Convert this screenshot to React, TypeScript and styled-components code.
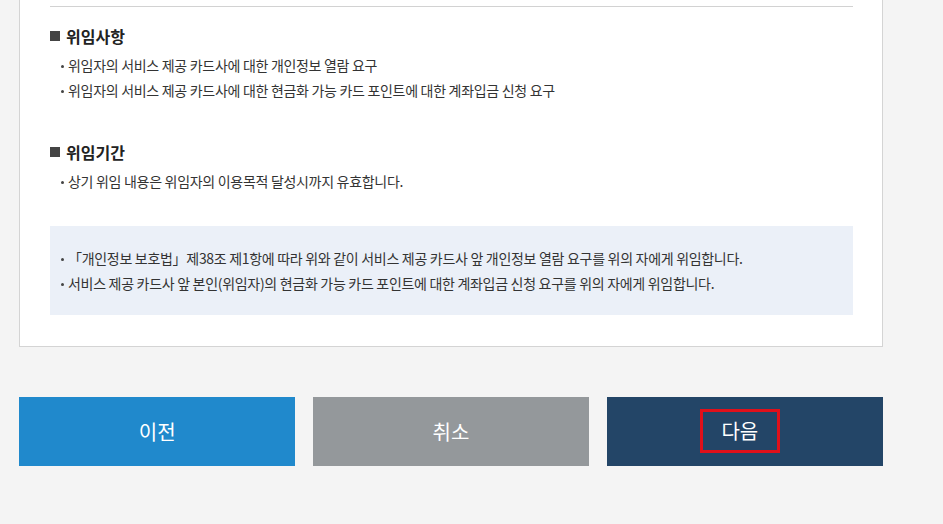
import { FC } from "react";
import styled, { createGlobalStyle } from "styled-components";

const GlobalStyle = createGlobalStyle`
  html, body {
    margin: 0;
    padding: 0;
    background: #f4f4f4;
  }
  body {
    font-family: "Noto Sans CJK KR", "Noto Sans", sans-serif;
    color: #333;
  }
`;

type Section = { title: string; items: string[] };

const sections: Section[] = [
  {
    title: "위임사항",
    items: [
      "위임자의 서비스 제공 카드사에 대한 개인정보 열람 요구",
      "위임자의 서비스 제공 카드사에 대한 현금화 가능 카드 포인트에 대한 계좌입금 신청 요구",
    ],
  },
  {
    title: "위임기간",
    items: ["상기 위임 내용은 위임자의 이용목적 달성시까지 유효합니다."],
  },
];

const notices = [
  "「개인정보 보호법」제38조 제1항에 따라 위와 같이 서비스 제공 카드사 앞 개인정보 열람 요구를 위의 자에게 위임합니다.",
  "서비스 제공 카드사 앞 본인(위임자)의 현금화 가능 카드 포인트에 대한 계좌입금 신청 요구를 위의 자에게 위임합니다.",
];

const App: FC = () => {
  return (
    <>
      <GlobalStyle />
      <StPage>
        <StCard>
          <StDivider />
          {sections.map((section, index) => (
            <StSection key={section.title} $first={index === 0}>
              <StHeading>{section.title}</StHeading>
              <StList>
                {section.items.map((item) => (
                  <li key={item}>{item}</li>
                ))}
              </StList>
            </StSection>
          ))}
          <StNotice>
            <StList>
              {notices.map((n) => (
                <li key={n}>{n}</li>
              ))}
            </StList>
          </StNotice>
        </StCard>
        <StButtons>
          <StButton $bg="#2089cc">이전</StButton>
          <StButton $bg="#94989b">취소</StButton>
          <StButton $bg="#234567">
            <StHighlight>다음</StHighlight>
          </StButton>
        </StButtons>
      </StPage>
    </>
  );
};

export default App;

const StPage = styled.div`
  width: 864px;
  margin-left: 19px;
`;

const StCard = styled.div`
  background: #fff;
  border: 1px solid #d4d4d4;
  border-top: none;
  padding: 6px 29px 31px 30px;
`;

const StDivider = styled.div`
  height: 1px;
  background: #d2d2d2;
`;

const StSection = styled.div<{ $first: boolean }>`
  margin-top: ${(p) => (p.$first ? "17px" : "37px")};
`;

const StHeading = styled.h3`
  display: flex;
  align-items: center;
  margin: 0;
  font-size: 16px;
  font-weight: 700;
  line-height: 24px;
  color: #222;
  letter-spacing: 0;

  &::before {
    content: "";
    width: 10px;
    height: 10px;
    background: #444;
    margin-right: 6px;
  }
`;

const StList = styled.ul`
  list-style: none;
  margin: 5px 0 0;
  padding: 0 0 0 10px;
  font-size: 14px;
  line-height: 25px;
  letter-spacing: -0.3px;
  color: #333;

  li {
    position: relative;
    padding-left: 8px;
  }

  li::before {
    content: "";
    position: absolute;
    left: 1px;
    top: 12px;
    width: 3px;
    height: 3px;
    border-radius: 50%;
    background: #444;
  }
`;

const StNotice = styled.div`
  margin-top: 32px;
  background: #ebf0f8;
  height: 89px;
  box-sizing: border-box;
  padding: 15px 0 0;
`;

const StButtons = styled.div`
  display: grid;
  grid-template-columns: repeat(3, 1fr);
  gap: 17.5px;
  margin-top: 50px;
`;

const StButton = styled.button<{ $bg: string }>`
  height: 69px;
  border: none;
  background: ${(p) => p.$bg};
  color: #fff;
  font-family: "Noto Sans CJK KR", "Noto Sans", sans-serif;
  font-size: 20px;
  display: flex;
  align-items: center;
  justify-content: center;
  cursor: pointer;
`;

const StHighlight = styled.span`
  display: inline-flex;
  align-items: center;
  justify-content: center;
  width: 80px;
  height: 44px;
  box-sizing: border-box;
  border: 3px solid #e0101a;
  margin-right: 10px;
  margin-bottom: 2px;
`;
